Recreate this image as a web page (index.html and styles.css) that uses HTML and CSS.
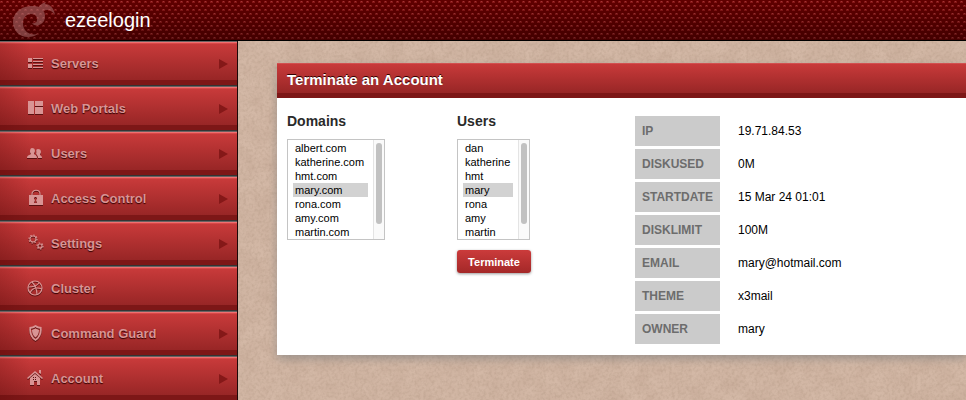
FILE: index.html
```html
<!DOCTYPE html>
<html lang="en">

<head>
    <meta charset="UTF-8">
    <title>ezeelogin</title>
    <link rel="stylesheet" href="styles.css">
</head>

<body>

    <header>
        <svg class="logo" viewBox="0 0 44 36" aria-hidden="true">
            <path d="M18 4C7 5 1 12 1 20c0 9 7 15 15 15 4 0 7-1 10-3-9 2-15-3-15-11 0-6 4-9 8-9 4 0 7 3 6 6 0 2-2 4-5 3 2 4 9 3 12-2 2-5 1-9-2-12-3-3-6-3-10-3z" />
            <path d="M26 6c2-3 4-5 8-6l-1 2c5 0 9 4 10 11-3-4-5-5-8-5-3 0-4 1-6 3-1-2-2-4-3-5z" />
        </svg>
        <h1>ezeelogin</h1>
    </header>

    <div class="container">
        <nav>
            <a class="menu-item" href="#servers">
                <svg class="icon" viewBox="0 0 16 16"><path d="M0 3h4v4H0zM0 9h4v4H0zM5 3h10v1H5zM5 6h10v1H5zM5 9h10v1H5zM5 12h10v1H5z" /></svg>
                Servers<span class="pil"></span>
            </a>
            <a class="menu-item" href="#portals">
                <svg class="icon" viewBox="0 0 16 16"><path d="M0 1h6v13H0zM7 1h8v5H7zM7 7h8v7H7z" /></svg>
                Web Portals<span class="pil"></span>
            </a>
            <a class="menu-item" href="#users">
                <svg class="icon" viewBox="0 0 16 16"><path d="M4 3c2 0 3 1 3 3 0 1-1 2-1 3 1 1 3 1 3 4H-1c0-3 3-3 4-4-1-1-1-2-1-3 0-2 1-3 2-3zM10 4c2 0 3 1 3 3 0 1-1 2-1 3 1 1 2 1 2 3h-4c0-2-1-3-2-4 1-2-1-5 2-5z" /></svg>
                Users<span class="pil"></span>
            </a>
            <a class="menu-item" href="#access">
                <svg class="icon" viewBox="0 0 16 16"><path fill-rule="evenodd" d="M1 5h14v10H1zM7 7L6 8v1l1 1-1 3h3l-1-3 1-1V8L8 7z" /><path class="streg" d="M4 5V4c0-5 8-5 8 0v1" /></svg>
                Access Control<span class="pil"></span>
            </a>
            <a class="menu-item" href="#settings">
                <svg class="icon" viewBox="0 0 16 16"><circle class="streg" cx="5" cy="4" r="3" /><circle class="tand" cx="5" cy="4" r="4" /><circle class="streg" cx="12" cy="11" r="2" /><circle class="tand" cx="12" cy="11" r="3" /></svg>
                Settings<span class="pil"></span>
            </a>
            <a class="menu-item" href="#cluster">
                <svg class="icon" viewBox="0 0 16 16"><circle class="streg" cx="7" cy="8" r="7" /><path class="streg" d="M4 2c4 4 5 8 5 13M0 7c5 0 9-1 11-4M2 13c2-5 7-6 12-4" /></svg>
                Cluster
            </a>
            <a class="menu-item" href="#guard">
                <svg class="icon" viewBox="0 0 16 16"><path fill-rule="evenodd" d="M7.500 0c2 1 4 2 6 2 1 6-1 11-6 14C2.500 13 .5 8 1.500 2c2 0 4-1 6-2zM7.500 2C6.500 3 4.500 3.500 3 3.700 3 8 4.500 12 7.500 14c3-2 4.500-6 4.500-10.300C10.500 3.500 8.500 3 7.500 2z" /><path d="M7.500 3.500l3.500 1.500c0 3-1 5.500-3.500 7.500C5 10.500 4 8 4 5z" /></svg>
                Command Guard<span class="pil"></span>
            </a>
            <a class="menu-item" href="#account">
                <svg class="icon" viewBox="0 0 16 16"><path d="M7 1l8 7-1 1-7-6-7 6-1-1zM11 0h2v4l-2-1z" /><path fill-rule="evenodd" d="M7 4l5 4v7H9v-4H6v4H2V8zM5 7v1h1V7zM7 7v1h1V7zM5 9v1h1V9zM7 9v1h1V9z" /></svg>
                Account<span class="pil"></span>
            </a>
        </nav>

        <main>
            <section class="panel">
                <h2>Terminate an Account</h2>
                <form class="data-container">
                    <div class="kolonne">
                        <label for="domains">Domains</label>
                        <select id="domains" class="domains" size="7">
                            <option>albert.com</option>
                            <option>katherine.com</option>
                            <option>hmt.com</option>
                            <option selected>mary.com</option>
                            <option>rona.com</option>
                            <option>amy.com</option>
                            <option>martin.com</option>
                        </select>
                    </div>
                    <div class="kolonne">
                        <label for="users">Users</label>
                        <select id="users" class="users" size="7">
                            <option>dan</option>
                            <option>katherine</option>
                            <option>hmt</option>
                            <option selected>mary</option>
                            <option>rona</option>
                            <option>amy</option>
                            <option>martin</option>
                        </select>
                        <button type="button">Terminate</button>
                    </div>
                    <table>
                        <tr><th scope="row">IP</th><td>19.71.84.53</td></tr>
                        <tr><th scope="row">DISKUSED</th><td>0M</td></tr>
                        <tr><th scope="row">STARTDATE</th><td>15 Mar 24 01:01</td></tr>
                        <tr><th scope="row">DISKLIMIT</th><td>100M</td></tr>
                        <tr><th scope="row">EMAIL</th><td>mary@hotmail.com</td></tr>
                        <tr><th scope="row">THEME</th><td>x3mail</td></tr>
                        <tr><th scope="row">OWNER</th><td>mary</td></tr>
                    </table>
                </form>
            </section>
        </main>
    </div>

</body>

</html>
```

FILE: styles.css
```css
* {
    box-sizing: border-box;
    font-family: "Liberation Sans", Arial, sans-serif;
}

body {
    margin: 0;
    min-height: 100vh;
    display: flex;
    flex-direction: column;
    font-size: 12px;
}

header {
    display: flex;
    flex: none;
    align-items: center;
    gap: 9px;
    height: 41px;
    padding-left: 12px;
    border-bottom: 1px solid #000;
    background:
        linear-gradient(rgba(0, 0, 0, 0), rgba(0, 0, 0, 0.3)),
        url("data:image/svg+xml,%3Csvg xmlns='http://www.w3.org/2000/svg' width='6' height='8'%3E%3Cpath fill='%23600000' d='M0 0h6v8H0z'/%3E%3Cpath fill='%23851616' d='M0 1h3v2H0zM3 5h3v2H3z'/%3E%3Cpath fill='%23a33838' d='M1 1h1v1H1zM4 5h1v1H4z'/%3E%3C/svg%3E");
}

header h1 {
    margin: 0;
    color: #fff;
    font-size: 20px;
    font-weight: normal;
}

.logo {
    width: 44px;
    height: 36px;
    fill: #b57a7a;
    opacity: 0.5;
}

.container {
    display: flex;
    flex: 1;
}

nav {
    flex: none;
    width: 238px;
    border-right: 1px solid #1c0808;
    background-color: #7d1717;
}

.menu-item {
    display: flex;
    align-items: center;
    gap: 7px;
    height: 45px;
    padding: 0 9px 0 28px;
    border-top: 1px solid #6a6262;
    border-bottom: 1px solid #333;
    background:
        linear-gradient(90deg, rgba(80, 0, 0, 0.2), transparent 30px),
        linear-gradient(#f07070 1px, #d84848 1px, #d84848 2px, #c83a3a 2px, #982626 38px, #7d1717 38px);
    color: #d99494;
    font-size: 13px;
    font-weight: bold;
    text-decoration: none;
    text-shadow: 0 1px 1px #300;
}

.icon {
    width: 16px;
    height: 16px;
    margin-bottom: 2px;
    overflow: visible;
    fill: #d99494;
    filter: drop-shadow(0 1px 0 #5a1010);
}

.streg,
.tand {
    fill: none;
    stroke: #d99494;
    stroke-width: 1.2;
}

.tand {
    stroke-dasharray: 1.5 1.6;
}

.pil {
    margin-left: auto;
    border-left: 9px solid #851818;
    border-top: 5px solid transparent;
    border-bottom: 5px solid transparent;
}

main {
    flex: 1;
    min-width: 0;
    padding: 22px 0 22px 39px;
    background-color: #d3b8a6;
    background-image: url("data:image/svg+xml,%3Csvg xmlns='http://www.w3.org/2000/svg' width='728' height='360'%3E%3Cfilter id='p' x='0' y='0' width='100%25' height='100%25'%3E%3CfeTurbulence type='fractalNoise' baseFrequency='.06' numOctaves='5' seed='4'/%3E%3CfeColorMatrix values='0 0 0 0 .45 0 0 0 0 .3 0 0 0 0 .22 .45 0 0 0 -.13'/%3E%3C/filter%3E%3Cfilter id='k' x='0' y='0' width='100%25' height='100%25'%3E%3CfeTurbulence type='fractalNoise' baseFrequency='.35' numOctaves='2' seed='9'/%3E%3CfeColorMatrix values='0 0 0 0 .4 0 0 0 0 .28 0 0 0 0 .2 .7 0 0 0 -.28'/%3E%3C/filter%3E%3Crect width='728' height='360' filter='url(%23p)'/%3E%3Crect width='728' height='360' filter='url(%23k)'/%3E%3C/svg%3E");
}

.panel {
    background-color: #fff;
    box-shadow: 0 4px 8px rgba(130, 130, 130, 0.6);
}

.panel h2 {
    height: 35px;
    margin: 0;
    padding-left: 10px;
    border-bottom: 5px solid #7d1717;
    background: linear-gradient(#d25050 1px, #c83a3a 1px, #982626);
    color: #fff;
    font-size: 15px;
    line-height: 34px;
    text-shadow: 0 -1px 0 #300;
}

.data-container {
    display: flex;
    padding: 15px 10px 8px;
}

.kolonne {
    flex: none;
    width: 170px;
}

.kolonne label {
    display: block;
    margin-bottom: 10px;
    color: #2a2a2a;
    font-size: 14px;
    font-weight: bold;
    line-height: 16px;
}

/* scrollbar is drawn as a background so it is always visible */
select {
    display: block;
    height: 101px;
    padding: 1px 16px 0 5px;
    overflow: hidden;
    border: 1px solid #c4c4c4;
    border-radius: 0;
    background: #fff url("data:image/svg+xml,%3Csvg xmlns='http://www.w3.org/2000/svg' width='11' height='99'%3E%3Cpath fill='%23fafafa' d='M0 0h11v99H0z'/%3E%3Cpath fill='%23e4e4e4' d='M0 0h1v99H0z'/%3E%3Crect x='3' y='3' width='6' height='81' rx='3' fill='%23c1c1c1'/%3E%3C/svg%3E") no-repeat right top;
    outline: none;
    font-size: 11px;
}

.domains {
    width: 98px;
}

.users {
    width: 73px;
}

option {
    min-height: 14px;
    height: 14px;
    padding: 1px 2px 0;
    color: #000;
    line-height: 14px;
}

option:checked {
    background: #d2d2d2 linear-gradient(#d2d2d2, #d2d2d2);
}

button {
    width: 74px;
    height: 23px;
    margin-top: 10px;
    padding: 0;
    border: 0;
    border-radius: 3px;
    background: linear-gradient(#cb3b3b, #a42828);
    box-shadow: 0 1px 3px rgba(0, 0, 0, 0.4);
    color: #fff;
    font-size: 11px;
    font-weight: bold;
}

table {
    margin-left: 5px;
    border-spacing: 3px;
}

th {
    width: 85px;
    height: 30px;
    padding: 0 0 0 7px;
    background-color: #cbcbcb;
    color: #6d6d6d;
    text-align: left;
}

td {
    padding: 0 0 0 15px;
    color: #000;
}
```
